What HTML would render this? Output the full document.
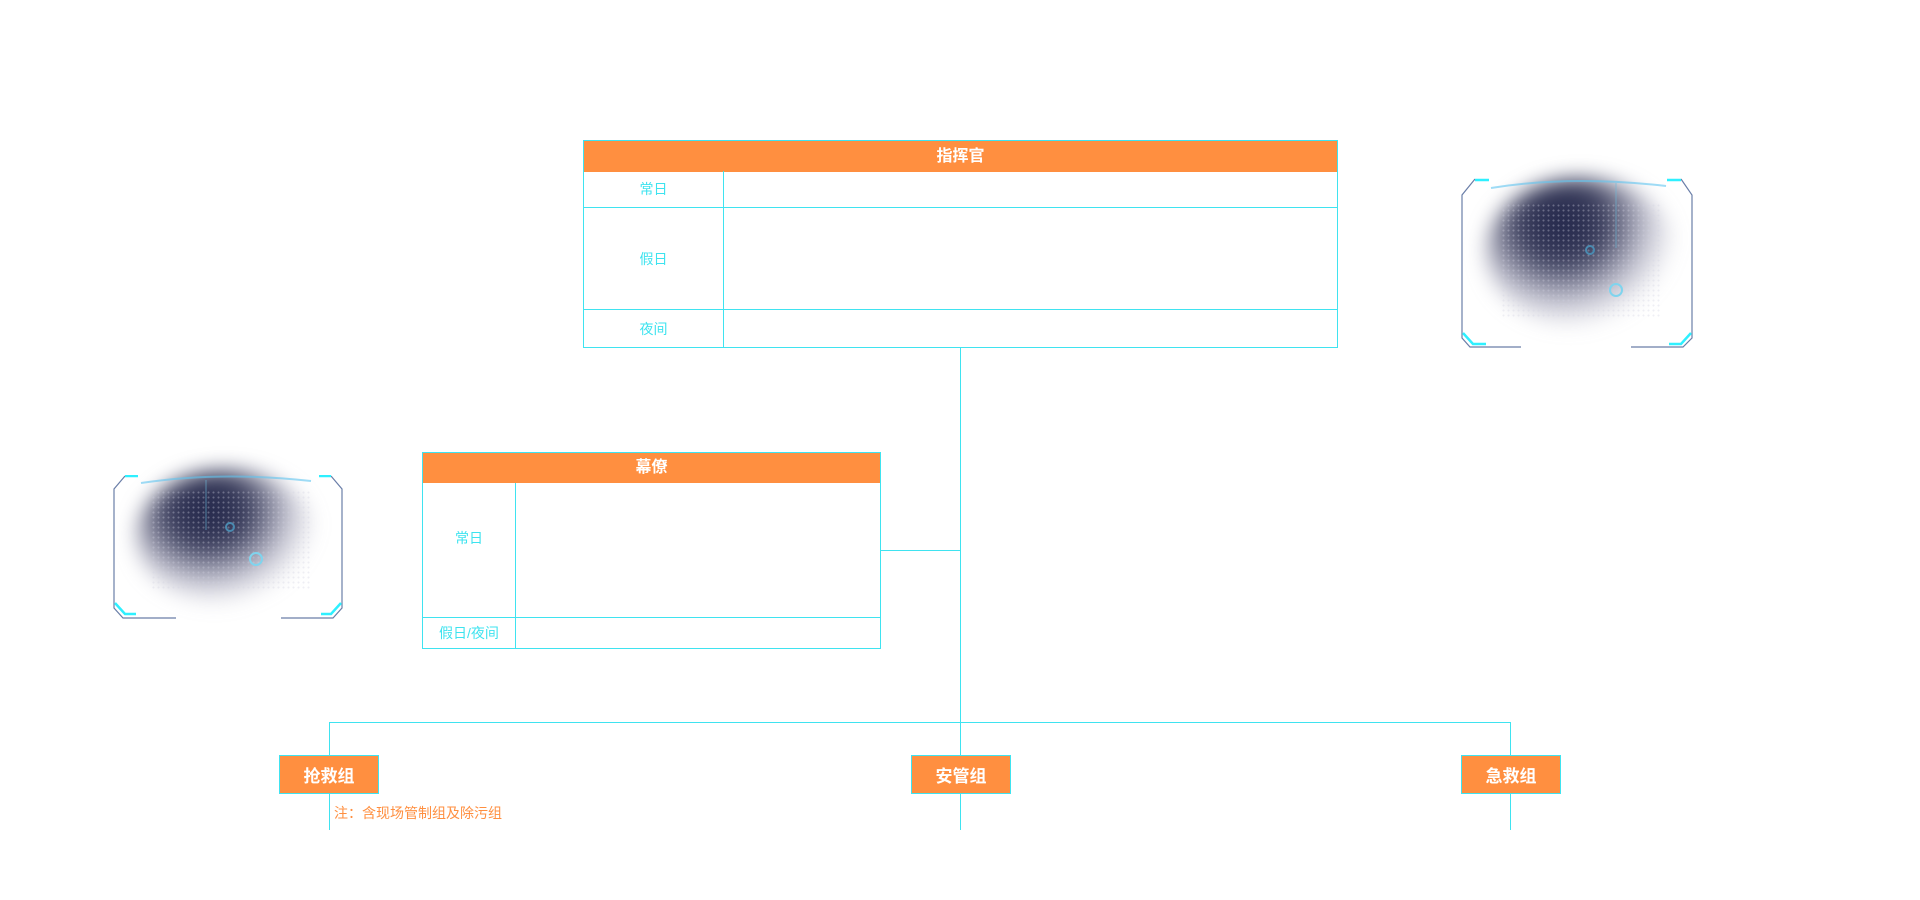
<!DOCTYPE html>
<html><head><meta charset="utf-8"><style>
body{margin:0;width:1920px;height:900px;background:#fff;position:relative;overflow:hidden;font-family:"Liberation Sans","Noto Sans CJK SC",sans-serif}
.a{position:absolute}
.t{position:absolute;border:1px solid #3fe3f0;box-sizing:border-box;background:#fff}
.h{background:#ff8f40;color:#fff;font-weight:bold;font-size:16px;text-align:center;box-sizing:border-box}
.lbl{position:absolute;left:0;color:#3de3ef;font-size:14px;text-align:center;display:flex;align-items:center;justify-content:center}
.hl{position:absolute;height:1px;background:#3fe3f0}
.vl{position:absolute;width:1px;background:#3fe3f0}
.g{position:absolute;width:100px;height:39px;background:#ff8f40;border:1px solid #3fe3f0;box-sizing:border-box;color:#fff;font-weight:bold;font-size:17px;display:flex;align-items:center;justify-content:center}
.deco{position:absolute;width:234px;height:170px}
.deco .blob{position:absolute;left:25px;top:-5px;width:180px;height:135px;border-radius:50%;background:radial-gradient(ellipse at 40% 30%,#22264a 0%,#3a3d5c 25%,rgba(120,120,150,.45) 52%,rgba(255,255,255,0) 72%);filter:blur(10px)}
.deco .dots{position:absolute;left:40px;top:15px;width:160px;height:100px;background-image:radial-gradient(circle,rgba(210,210,225,.7) 0.8px,transparent 1.2px);background-size:5px 5px;opacity:.5}
.deco .glow{position:absolute;left:0;top:0;right:0;bottom:0;box-shadow:inset 0 0 10px rgba(120,230,255,.35)}
</style></head><body>
<div class="vl" style="left:960px;top:347px;height:483px"></div>
<div class="hl" style="left:880px;top:550px;width:80px"></div>
<div class="hl" style="left:329px;top:722px;width:1182px"></div>
<div class="vl" style="left:329px;top:722px;height:108px"></div>
<div class="vl" style="left:1510px;top:722px;height:108px"></div>

<div class="t" style="left:583px;top:140px;width:755px;height:208px">
 <div class="h" style="height:31px;line-height:31px">指挥官</div>
 <div class="hl" style="left:0;right:0;top:66px;width:auto"></div>
 <div class="hl" style="left:0;right:0;top:168px;width:auto"></div>
 <div class="vl" style="left:139px;top:30px;bottom:0"></div>
 <div class="lbl" style="top:30px;height:36px;width:139px">常日</div>
 <div class="lbl" style="top:67px;height:101px;width:139px">假日</div>
 <div class="lbl" style="top:169px;height:37px;width:139px">夜间</div>
</div>

<div class="t" style="left:422px;top:452px;width:459px;height:197px">
 <div class="h" style="height:30px;line-height:30px">幕僚</div>
 <div class="hl" style="left:0;right:0;top:164px;width:auto"></div>
 <div class="vl" style="left:92px;top:30px;bottom:0"></div>
 <div class="lbl" style="top:30px;height:110px;width:92px">常日</div>
 <div class="lbl" style="top:165px;height:30px;width:92px">假日/夜间</div>
</div>

<div class="g" style="left:279px;top:755px">抢救组</div>
<div class="g" style="left:911px;top:755px">安管组</div>
<div class="g" style="left:1461px;top:755px">急救组</div>
<div class="a" style="left:334px;top:803px;color:#ff8f40;font-size:14px">注：含现场管制组及除污组</div>

<div class="deco" style="left:111px;top:475px;height:145px">
 <div class="blob"></div><div class="dots"></div>
 <svg class="a" style="left:0;top:0" width="234" height="145" viewBox="0 0 234 145">
  <path d="M30 8 Q110 -4 200 6" fill="none" stroke="#5fc4f0" stroke-width="2" opacity=".6"/>
  <path d="M14 1 L3 14 V133 L12 143 H65 M170 143 H222 L231 133 V14 L220 1" fill="none" stroke="#6a7ea8" stroke-width="1.2"/>
  <path d="M14 1 H27 M220 1 H208 M4 128 L14 139 H25 M230 128 L220 139 H210" fill="none" stroke="#2ef0ff" stroke-width="2.5"/>
  <line x1="95" y1="5" x2="95" y2="55" stroke="#6ab8d8" stroke-width="1" opacity=".6"/>
  <circle cx="145" cy="84" r="6" fill="none" stroke="#7fd4ee" stroke-width="2"/>
  <circle cx="119" cy="52" r="4" fill="none" stroke="#4a8ab0" stroke-width="2"/>
 </svg>
</div>
<div class="deco" style="left:1461px;top:178px">
 <div class="blob" style="top:0;height:150px;width:190px"></div><div class="dots" style="top:25px;height:115px"></div>
 <svg class="a" style="left:0;top:0" width="234" height="170" viewBox="0 0 234 170">
  <path d="M30 10 Q110 -3 205 8" fill="none" stroke="#5fc4f0" stroke-width="2" opacity=".6"/>
  <path d="M14 1 L1 17 V160 L9 169 H60 M170 169 H222 L231 160 V17 L220 1" fill="none" stroke="#6a7ea8" stroke-width="1.2"/>
  <path d="M14 2 H28 M220 2 H206 M2 155 L12 166 H25 M230 155 L220 166 H208" fill="none" stroke="#2ef0ff" stroke-width="2.5"/>
  <line x1="155" y1="5" x2="155" y2="70" stroke="#6ab8d8" stroke-width="1" opacity=".6"/>
  <circle cx="155" cy="112" r="6" fill="none" stroke="#7fd4ee" stroke-width="2"/>
  <circle cx="129" cy="72" r="4" fill="none" stroke="#4a8ab0" stroke-width="2"/>
 </svg>
</div>
</body></html>
